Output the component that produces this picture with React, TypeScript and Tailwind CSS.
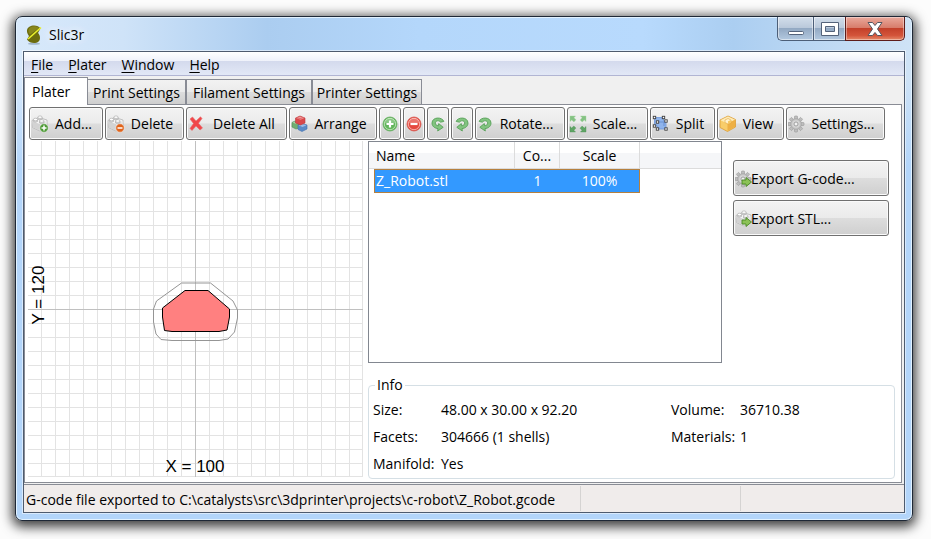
import type { ReactNode } from "react";

function Brick({ children }: { children?: ReactNode }) {
  return (
    <svg width="18" height="18" viewBox="0 0 18 18" aria-hidden="true">
      <path d="M1 5.500 L8 2.500 L16 5 L16 11.500 L9 16 L1.500 12.500Z" fill="#f4f4f4" stroke="#b4b4b4" strokeWidth=".8" />
      <path d="M1.500 6.500 L9 9 L9 15.500 L1.700 12.200Z" fill="#d3d3d3" />
      <path d="M9 9 L15.500 6 L15.500 11.300 L9 15.500Z" fill="#e6e6e6" />
      <path d="M2.500 4.500 v2 q2 1.500 4 0 v-2Z M7 2.200 v2 q2 1.500 4 0 v-2Z M8.500 6 v2 q2 1.500 4.500 0 v-2Z" fill="#dcdcdc" stroke="#a8a8a8" strokeWidth=".6" />
      <ellipse cx="4.500" cy="4.500" rx="2.100" ry="1.300" fill="#fff" stroke="#a8a8a8" strokeWidth=".6" />
      <ellipse cx="9" cy="2.200" rx="2.100" ry="1.300" fill="#fff" stroke="#a8a8a8" strokeWidth=".6" />
      <ellipse cx="10.700" cy="6" rx="2.300" ry="1.300" fill="#fff" stroke="#a8a8a8" strokeWidth=".6" />
      {children}
    </svg>
  );
}

function Badge({ color, plus }: { color: string; plus?: boolean }) {
  return (
    <g>
      <circle cx="13" cy="13" r="4.200" fill={color} stroke="#f3f3f3" strokeWidth=".5" />
      <path d={plus ? "M10.500 13h5M13 10.500v5" : "M10.500 13h5"} stroke="#fff" strokeWidth="1.500" />
    </g>
  );
}

const gearTeeth = [0, 45, 90, 135, 180, 225, 270, 315];

function Gear({ children }: { children?: ReactNode }) {
  return (
    <svg width="18" height="18" viewBox="0 0 18 18" aria-hidden="true">
      {gearTeeth.map((a) => (
        <rect key={a} x="6.500" y="1" width="3" height="4" rx=".6" fill="#bebebe" stroke="#999" strokeWidth=".6" transform={`rotate(${a} 8 9)`} />
      ))}
      <circle cx="8" cy="9" r="5.400" fill="#c2c2c2" stroke="#a0a0a0" strokeWidth=".6" />
      <circle cx="8" cy="9" r="3.800" fill="#d6d6d6" />
      <circle cx="8" cy="9" r="2" fill="#f2f2f2" stroke="#8f8f8f" strokeWidth=".8" />
      {children}
    </svg>
  );
}

function ExportArrow() {
  return <path d="M7 10 h4 v-2.500 L16.500 12 L11 16.500 V14 H7Z" fill="#8cc257" stroke="#4a8a25" strokeWidth=".9" />;
}

function Cross() {
  return (
    <svg width="18" height="18" viewBox="0 0 18 18" aria-hidden="true">
      <path d="M2 4 L4.500 2 L8 6 L12.500 1.800 L14 3.500 L10.500 8.300 L14.500 13 L12 15 L8 11 L4 15.500 L2 13.500 L5.500 8.500Z" fill="#f0474a" stroke="#e8686a" strokeWidth=".6" strokeLinejoin="round" />
    </svg>
  );
}

function Bricks() {
  return (
    <svg width="18" height="18" viewBox="0 0 18 18" aria-hidden="true">
      <path d="M1 7.500 L4 6 L8 8 V13 L5 14 L1 12Z" fill="#6fae72" stroke="#4d8c54" strokeWidth=".6" />
      <path d="M1.500 7.500 L4 6.500 L7 8 L5 9Z" fill="#a6d3a5" />
      <path d="M7 10 L11 8.500 L16 10 V14 L11 16.500 L7 14.500Z" fill="#5b8ac6" stroke="#3e6fae" strokeWidth=".6" />
      <path d="M7.500 10.200 L11 9 L15.500 10.200 L11.500 12Z" fill="#9bbde6" />
      <path d="M4.500 3 L9 1 L14 3 V8 L9.500 10 L4.500 8Z" fill="#d9484b" stroke="#b8393d" strokeWidth=".6" />
      <path d="M5 3 L9 1.500 L13.500 3 L9.500 4.800Z" fill="#f08a8a" />
      <ellipse cx="9" cy="2.500" rx="2" ry="1" fill="#f6a3a3" stroke="#c94a4a" strokeWidth=".5" />
    </svg>
  );
}

function RoundSign({ kind }: { kind: "more" | "less" }) {
  const more = kind === "more";
  return (
    <svg width="16" height="16" viewBox="0 0 16 16" aria-hidden="true">
      <circle cx="8" cy="8" r="7" fill={more ? "#62b55b" : "#e5483f"} stroke={more ? "#64ad60" : "#d5584f"} strokeWidth=".8" />
      <circle cx="8" cy="8" r="5.700" fill="none" stroke={more ? "#b5e0ae" : "#f7aaa2"} />
      <path d="M3 7 A5 5 0 0 1 13 7 Q8 9 3 7Z" fill="#fff" opacity=".25" />
      <path d={more ? "M4.500 8h7M8 4.500v7" : "M4.500 8h7"} stroke="#fff" strokeWidth="2.200" />
    </svg>
  );
}

function Turn({ ccw }: { ccw?: boolean }) {
  return (
    <svg width="16" height="16" viewBox="0 0 16 16" aria-hidden="true">
      <g transform={ccw ? "translate(16 0) scale(-1 1)" : undefined}>
        <path d="M2.200 5.500 C3.500 0.800 13.800 0.500 14 7 C14 10.500 11 12.300 8 12.600 L8.300 15 L2.800 11.300 L7.300 7.600 L7.600 9.800 C9.500 9.600 10.900 8.600 10.700 6.900 C10.400 4.200 6.500 4.200 5.600 6.200Z" fill="#82c480" stroke="#57a058" strokeWidth=".9" strokeLinejoin="round" />
      </g>
    </svg>
  );
}

const corners = [0, 90, 180, 270];

function ScaleIcon() {
  return (
    <svg width="18" height="18" viewBox="0 0 18 18" aria-hidden="true">
      {corners.map((a, i) => (
        <path key={a} d="M1 1 H6.500 L5 2.700 L7 4.800 L4.900 6.900 L2.700 4.900 L1 6.500Z" fill={i < 2 ? "#84c283" : "#5fa565"} stroke={i < 2 ? "#a3d4a0" : "#4c9153"} strokeWidth=".4" transform={`rotate(${a} 9 9)`} />
      ))}
    </svg>
  );
}

const nodes = [[2.5, 2.5], [11.5, 2.5], [5.5, 7], [14, 6], [2.5, 11], [5.5, 14], [14, 14]];

function SplitIcon() {
  return (
    <svg width="18" height="18" viewBox="0 0 18 18" aria-hidden="true">
      <path d="M2.500 2.500 H11.500 V6 H14 V14 H5.500 V11 H2.500Z" fill="#8fb4ec" stroke="#6d96d8" strokeWidth=".8" />
      <path d="M5.500 7 H12 V11" fill="none" stroke="#5f89cd" strokeWidth=".8" />
      {nodes.map(([x, y]) => (
        <rect key={`${x}-${y}`} x={x - 1.2} y={y - 1.2} width="2.400" height="2.400" fill="#fff" stroke="#3e3e3e" strokeWidth=".9" />
      ))}
    </svg>
  );
}

function ViewIcon() {
  return (
    <svg width="18" height="18" viewBox="0 0 18 18" aria-hidden="true">
      <path d="M9 1 L16.500 4.500 V12 L8.500 16.500 L1 12.500 V5Z" fill="#f8cd6a" stroke="#dc9c33" strokeWidth=".8" />
      <path d="M9 1.500 L16 4.800 L8.500 8.500 L1.500 5.200Z" fill="#fdebb8" />
      <path d="M8.500 8.500 L16 4.800 V11.800 L8.500 16Z" fill="#eeb045" />
      <path d="M6 5 l3 -1.500 l3 1.500 v2.500 l-3 1.500 l-3 -1.500Z" fill="#fff3cf" stroke="#e2a43c" strokeWidth=".6" />
      <path d="M9 6.300 l3 -1.300 v2.500 l-3 1.500Z" fill="#f5c765" />
    </svg>
  );
}

function Logo() {
  return (
    <svg width="16" height="20" viewBox="0 0 16 20" aria-hidden="true">
      <ellipse cx="8" cy="18.700" rx="6" ry="1" fill="#6b84a0" opacity=".5" />
      <path d="M14.500 3.500 C12 -1 1.500 -.5 1 5.500 C.8 8 2 9.500 3 11 L1 14.500 C4 19.500 14 19.500 14 13 C14 10.500 13 9 12 8Z" fill="#6d6c0e" />
      <path d="M13 3 C10 0 3 1 2.500 5 C2.300 7 3 8.500 4 9.500Z" fill="#88861c" />
      <path d="M15 2.500 L2 14" stroke="#eaf02c" strokeWidth="1.600" />
    </svg>
  );
}

const face = "rounded-[3px] border border-[#707070] bg-[linear-gradient(#f3f3f3_0%,#ebebeb_49%,#dddddd_51%,#cfcfcf_100%)] shadow-[inset_0_0_0_1px_#fafafa]";

function ToolButton({ icon, label, width }: { icon: ReactNode; label: string; width: string }) {
  return (
    <button type="button" className={`flex h-[33px] shrink-0 items-center pr-1 pl-px ${face} ${width}`}>
      {icon}
      <span className="flex-1 text-center whitespace-nowrap">{label}</span>
    </button>
  );
}

function SmallButton({ icon, label }: { icon: ReactNode; label: string }) {
  return (
    <button type="button" aria-label={label} className={`flex h-[33px] w-[22px] shrink-0 items-center justify-center ${face}`}>
      {icon}
    </button>
  );
}

function Toolbar() {
  return (
    <div className="flex gap-[2px] pt-[2px] pl-1">
      <ToolButton width="w-[74px]" label="Add..." icon={<Brick><Badge color="#4d9a35" plus /></Brick>} />
      <ToolButton width="w-[79px]" label="Delete" icon={<Brick><Badge color="#e0641c" /></Brick>} />
      <ToolButton width="w-[101px]" label="Delete All" icon={<Cross />} />
      <ToolButton width="w-[88px]" label="Arrange" icon={<Bricks />} />
      <SmallButton label="More copies" icon={<RoundSign kind="more" />} />
      <SmallButton label="Fewer copies" icon={<RoundSign kind="less" />} />
      <SmallButton label="Rotate left" icon={<Turn ccw />} />
      <SmallButton label="Rotate right" icon={<Turn />} />
      <ToolButton width="w-[90px]" label="Rotate..." icon={<Turn />} />
      <ToolButton width="w-[81px]" label="Scale..." icon={<ScaleIcon />} />
      <ToolButton width="w-[65px]" label="Split" icon={<SplitIcon />} />
      <ToolButton width="w-[67px]" label="View" icon={<ViewIcon />} />
      <ToolButton width="w-[99px]" label="Settings..." icon={<Gear />} />
    </div>
  );
}

const steps = Array.from({ length: 23 }, (_, i) => 14 * (i + 1));

function Bed() {
  return (
    <svg width="335" height="336" viewBox="0 0 335 336" className="shrink-0" role="img" aria-label="Print bed">
      <g shapeRendering="crispEdges">
        {steps.map((s) => (
          <g key={s} fill="#e3e3e3">
            <rect x={s - 1} y="0" width="1" height="336" />
            <rect x="0" y={s} width="335" height="1" />
          </g>
        ))}
        <rect x="334" y="0" width="1" height="336" fill="#e3e3e3" />
        <rect x="0" y="335" width="335" height="1" fill="#e3e3e3" />
        <rect x="167" y="0" width="1" height="336" fill="#c0c0c0" />
        <rect x="0" y="168" width="335" height="1" fill="#c0c0c0" />
      </g>
      <path d="M153.500 142 H182.500 L205 160 L209.500 169 V177 L206.500 191 L200 198 L191 199.500 H144 L133 198.500 L128 193 L125.500 181 V168 L128.500 160Z" fill="none" stroke="#959595" />
      <path d="M157 149.500 H180 L201.500 168 V176 L199 189 L191 190.500 H144 L136.500 189.500 L134.500 176 V167Z" fill="#ff8080" stroke="#000" />
      <g fill="#000" fontSize="17" textAnchor="middle" className="font-['Liberation_Sans',Arial,sans-serif]">
        <text x="167" y="331">X = 100</text>
        <text transform="translate(16 154) rotate(-90)">Y = 120</text>
      </g>
    </svg>
  );
}

const th = "h-[27px] border-b border-[#dcdcdc] p-0 pt-[2px] font-normal";
const td = "h-6 border-y border-[#b5803f] bg-[#3399ff] p-0 text-center text-white";

function ObjectList() {
  return (
    <div className="h-[222px] min-w-0 flex-1 border border-[#828790]">
      <table className="w-full table-fixed border-separate border-spacing-0">
        <colgroup>
          <col className="w-[5px]" />
          <col className="w-[141px]" />
          <col className="w-[45px]" />
          <col className="w-[80px]" />
          <col />
        </colgroup>
        <thead className="bg-[linear-gradient(#ffffff_40%,#f5f6f8_41%)]">
          <tr>
            <td className={th} />
            <th className={`${th} border-r pl-[2px] text-left`}>Name</th>
            <th className={`${th} border-r text-center`}>Co...</th>
            <th className={`${th} border-r text-center`}>Scale</th>
            <td className={th} />
          </tr>
        </thead>
        <tbody>
          <tr>
            <td className="p-0" />
            <td className={`${td} border-l pl-px text-left!`}>Z_Robot.stl</td>
            <td className={td}>1</td>
            <td className={`${td} border-r`}>100%</td>
            <td className="p-0" />
          </tr>
        </tbody>
      </table>
    </div>
  );
}

function ExportButton({ icon, label }: { icon: ReactNode; label: string }) {
  return (
    <button type="button" className={`flex h-9 w-full items-center pt-px pl-px ${face}`}>
      <span className="-mr-[2px] shrink-0">{icon}</span>
      <span className="whitespace-nowrap">{label}</span>
    </button>
  );
}

function Info() {
  return (
    <fieldset className="mr-[6px] h-[104px] rounded-[4px] border border-[#d5dfe5] px-1">
      <legend className="ml-[2px] px-[2px] leading-5">Info</legend>
      <dl className="grid grid-cols-[68px_minmax(0,1fr)_69px_150px] gap-x-0 pt-px leading-[27px] whitespace-nowrap">
        <dt>Size:</dt>
        <dd>48.00 x 30.00 x 92.20</dd>
        <dt>Volume:</dt>
        <dd>36710.38</dd>
        <dt>Facets:</dt>
        <dd>304666 (1 shells)</dd>
        <dt>Materials:</dt>
        <dd>1</dd>
        <dt>Manifold:</dt>
        <dd>Yes</dd>
      </dl>
    </fieldset>
  );
}

function TitleBar() {
  const cap = "flex h-full items-center justify-center border-[#4d5f78] bg-[linear-gradient(#d3deeb_0%,#b9c8da_48%,#93a9c3_50%,#b3c9e0_100%)] shadow-[inset_0_0_0_1px_rgba(255,255,255,0.5)]";
  return (
    <header className="flex h-[34px] items-start pl-[10px]">
      <div className="flex h-full flex-1 items-center gap-[7px] pt-px">
        <Logo />
        <h1 className="[text-shadow:0_0_8px_#fff,0_0_12px_#fff]">Slic3r</h1>
      </div>
      <div className="mr-[7px] flex h-6">
        <button type="button" aria-label="Minimize" className={`${cap} w-9 rounded-bl-[5px] border-b border-l`}>
          <svg width="18" height="14" viewBox="0 0 18 14"><rect x="1.500" y="9.500" width="15" height="3" rx="1" fill="#fff" stroke="#53627a" /></svg>
        </button>
        <button type="button" aria-label="Maximize" className={`${cap} w-8 border-b border-l`}>
          <svg width="18" height="14" viewBox="0 0 18 14"><path d="M.5 .5h17v13H.5Z M4.500 4.500v5h9v-5Z" fillRule="evenodd" fill="#fff" stroke="#53627a" /></svg>
        </button>
        <button type="button" aria-label="Close" className="flex h-full w-[60px] items-center justify-center rounded-br-[5px] border-x border-b border-[#5d1c1a] bg-[linear-gradient(#e9a99c_0%,#d77b69_48%,#c3402a_50%,#d3543a_80%,#e58a6a_100%)] shadow-[inset_0_0_0_1px_rgba(255,255,255,0.4)]">
          <svg width="16" height="14" viewBox="0 0 16 14"><path d="M1 .5h4.500L8 3.500 10.500 .5H15L10.500 7 15 13.500h-4.500L8 10.500 5.500 13.500H1L5.500 7Z" fill="#fff" stroke="#53555f" /></svg>
        </button>
      </div>
    </header>
  );
}

const menus = ["File", "Plater", "Window", "Help"];
const tab = "h-[25px] border border-b-0 border-[#898c95] bg-[linear-gradient(#f2f2f2_0%,#ebebeb_49%,#dddddd_51%,#cfcfcf_100%)] pt-px text-center whitespace-nowrap";

export default function App() {
  return (
    <div className="flex min-h-screen bg-[#fcfcfc] pt-4 pr-[18px] pb-[18px] pl-[15px] font-['Open_Sans','Noto_Sans',sans-serif] text-[14px] leading-5 text-black">
      <div className="flex min-w-0 flex-1 flex-col rounded-[7px] border border-[#1e2836] bg-[linear-gradient(to_bottom,transparent_60px,#b3d5fa_150px),linear-gradient(to_right,#d8e9fb_0%,#cfe3f8_12%,#abcdf0_28%,#b4d7fb_45%,#b8dafd_70%,#abcef1_80%,#cfe3f6_100%)] shadow-[inset_0_0_0_1px_#e2f2ff,0_3px_12px_3px_rgba(0,0,0,0.75)]">
        <TitleBar />
        <div className="mx-[7px] mb-[7px] flex flex-1 flex-col border border-[#4e5b6e] bg-[#f0f0f0] shadow-[0_0_0_1px_rgba(255,255,255,0.5)]">
          <nav className="flex h-6 items-center gap-[15px] border-b border-[#b1b5d3] bg-[linear-gradient(#ffffff_0%,#eef1fa_40%,#d4daed_41%,#e2e8f6_100%)] pt-[2px] pr-2 pl-[7px]">
            {menus.map((m) => (
              <button type="button" key={m}>
                <span className="underline underline-offset-2">{m[0]}</span>
                {m.slice(1)}
              </button>
            ))}
          </nav>
          <div role="tablist" className="flex items-end pt-px">
            <button type="button" role="tab" aria-selected="true" className="relative -mb-px h-7 w-[64px] border border-b-0 border-[#898c95] bg-white pl-[7px] text-left">Plater</button>
            <button type="button" role="tab" aria-selected="false" className={`${tab} w-[98px] border-l-0`}>Print Settings</button>
            <button type="button" role="tab" aria-selected="false" className={`${tab} w-[126px]`}>Filament Settings</button>
            <button type="button" role="tab" aria-selected="false" className={`${tab} w-[110px]`}>Printer Settings</button>
          </div>
          <main className="mr-[2px] flex-1 border border-[#898c95] bg-white">
            <Toolbar />
            <div className="flex pt-px pb-[5px] pl-[3px]">
              <Bed />
              <div className="-mb-[2px] ml-[5px] flex min-w-0 flex-1 flex-col justify-between">
                <div className="flex gap-[11px] pr-3">
                  <ObjectList />
                  <div className="flex w-[156px] shrink-0 flex-col gap-1 pt-[19px]">
                    <ExportButton label="Export G-code..." icon={<Gear><ExportArrow /></Gear>} />
                    <ExportButton label="Export STL..." icon={<Brick><ExportArrow /></Brick>} />
                  </div>
                </div>
                <Info />
              </div>
            </div>
          </main>
          <footer className="mt-px flex h-7 border-t border-[#898c95] bg-[#f0eceb]">
            <div className="my-px w-[557px] border-r border-[#d5d3d2] pl-[2px] leading-7 whitespace-nowrap">G-code file exported to C:\catalysts\src\3dprinter\projects\c-robot\Z_Robot.gcode</div>
            <div className="my-px w-40 border-r border-[#d5d3d2]" />
          </footer>
        </div>
      </div>
    </div>
  );
}
